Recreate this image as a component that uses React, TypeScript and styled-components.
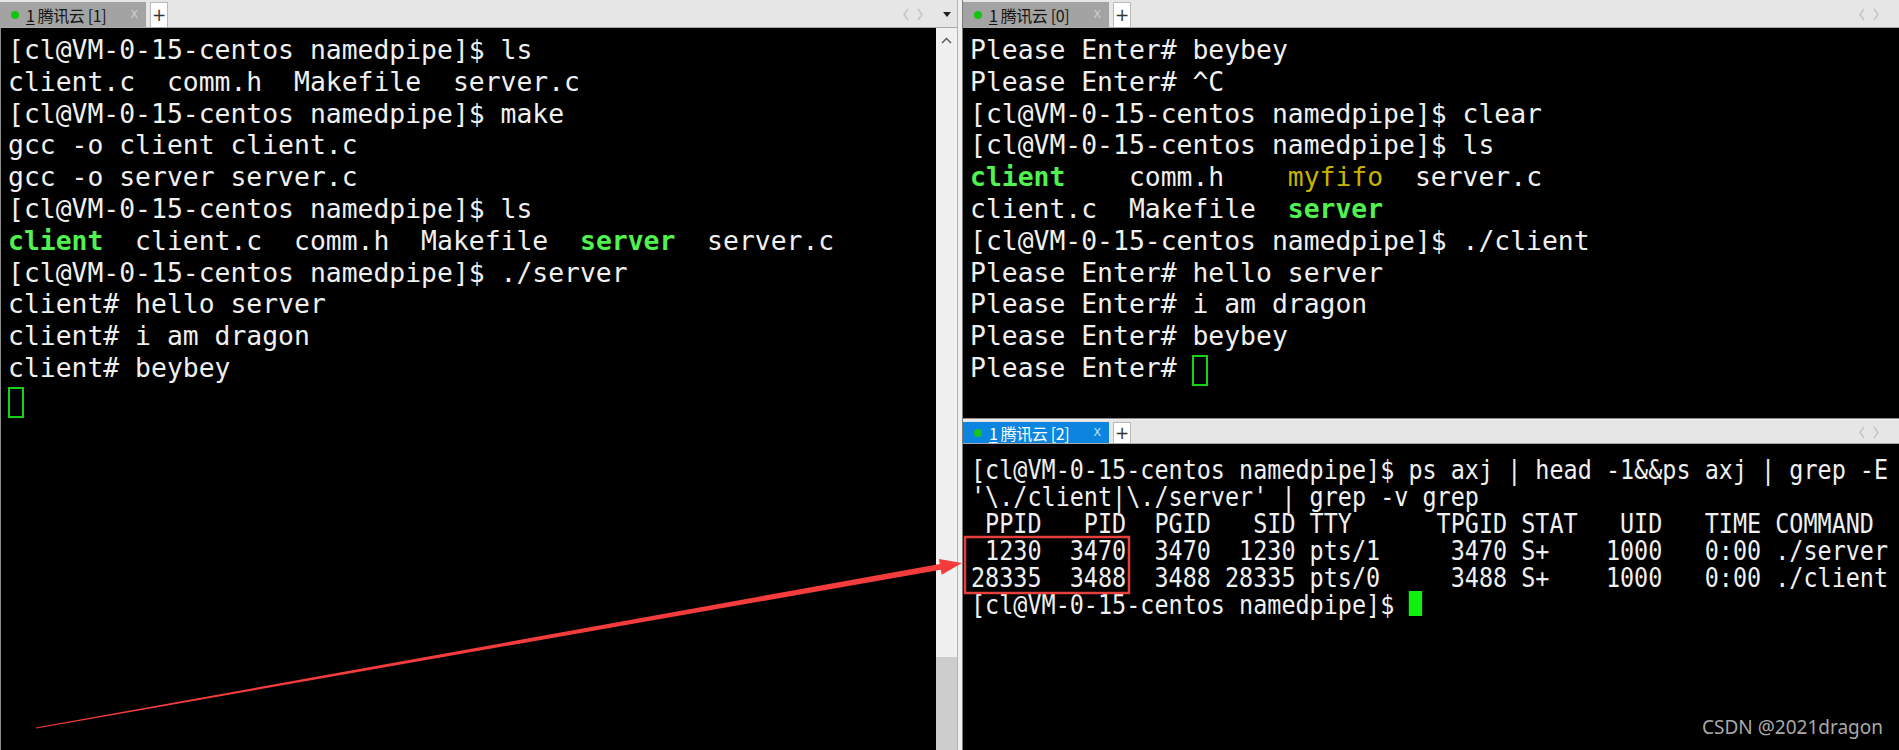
import styled, { createGlobalStyle } from "styled-components";

const PROMPT = "[cl@VM-0-15-centos namedpipe]$ ";

const GlobalStyle = createGlobalStyle`
  html, body {
    margin: 0;
    padding: 0;
  }
  body {
    background: #000;
    overflow: hidden;
  }
`;

const Screen = styled.div`
  position: relative;
  display: flex;
  width: 1899px;
  height: 750px;
  overflow: hidden;
  background: #e6e6e6;
`;

const LeftPane = styled.div`
  width: 957px;
  flex-shrink: 0;
  display: flex;
  flex-direction: column;
`;

const Splitter = styled.div`
  width: 4px;
  flex-shrink: 0;
  background: #efefef;
  border-left: 1px solid #b3b3b3;
  border-right: 1px solid #7c7c7c;
`;

const RightColumn = styled.div`
  flex: 1;
  min-width: 0;
  display: flex;
  flex-direction: column;
`;

const HSplit = styled.div`
  height: 1px;
  flex-shrink: 0;
  border-top: 1px solid #8a8a8a;
  background: #efefef;
`;

const TabBar = styled.div<{ $h: number; $padRight: number }>`
  height: ${(p) => p.$h}px;
  flex-shrink: 0;
  box-sizing: border-box;
  display: flex;
  align-items: stretch;
  padding: 2px ${(p) => p.$padRight}px 0 0;
  background: #e6e6e6;
  border-bottom: 1px solid #a9a9a9;
`;

const Tab = styled.div<{ $active?: boolean }>`
  width: 146px;
  box-sizing: border-box;
  display: flex;
  align-items: center;
  padding: 0 8px 0 11px;
  background: ${(p) => (p.$active ? "#0b85e0" : "#a3a3a3")};
  color: ${(p) => (p.$active ? "#ffffff" : "#141414")};
  font-family: "Noto Sans CJK SC", "Noto Sans", sans-serif;
  font-size: 16px;
`;

const Dot = styled.span<{ $active?: boolean }>`
  width: 8px;
  height: 8px;
  border-radius: 50%;
  background: ${(p) => (p.$active ? "#19c21e" : "#10c410")};
  margin-right: 7px;
`;

const TabLabel = styled.span`
  white-space: pre;
  letter-spacing: -0.4px;
  & u {
    text-underline-offset: 2px;
  }
`;

const TabClose = styled.span<{ $active?: boolean }>`
  margin-left: auto;
  font-family: "DejaVu Sans", sans-serif;
  font-size: 11px;
  color: ${(p) => (p.$active ? "#cfe6fa" : "#d2d2d2")};
`;

const PlusButton = styled.div`
  width: 18px;
  margin-left: 4px;
  box-sizing: border-box;
  display: flex;
  align-items: center;
  justify-content: center;
  background: #ffffff;
  border: 1px solid #b9b9b9;
  border-bottom: none;
  color: #333;
  font-family: "DejaVu Sans", sans-serif;
  font-size: 17px;
`;

const BarTools = styled.div`
  margin-left: auto;
  display: flex;
  align-items: center;
  gap: 20px;
`;

const Chevrons = styled.div`
  display: flex;
  align-items: center;
  gap: 8px;
`;

const PaneBody = styled.div<{ $basis?: number }>`
  flex: ${(p) => (p.$basis ? `0 0 ${p.$basis}px` : "1")};
  min-height: 0;
  display: flex;
`;

const Terminal = styled.div<{ $condensed?: boolean; $bordered?: boolean }>`
  flex: 1;
  min-width: 0;
  overflow: hidden;
  box-sizing: border-box;
  background: #000;
  border-left: ${(p) => (p.$bordered ? "1px solid #8c8c8c" : "none")};
  padding: ${(p) => (p.$condensed ? "13px 0 0 8px" : "6px 0 0 7px")};
  font-family: "DejaVu Sans Mono", monospace;
  font-size: 26.4px;
  color: #f0f0f0;
  white-space: pre;
`;

const TextBlock = styled.div<{ $condensed?: boolean }>`
  transform-origin: left top;
  transform: ${(p) => (p.$condensed ? "scaleX(0.888)" : "none")};
`;

const Line = styled.div<{ $h: number }>`
  height: ${(p) => p.$h}px;
  line-height: ${(p) => p.$h}px;
`;

const Hl = styled.span<{ $color: string; $bold?: boolean }>`
  color: ${(p) => p.$color};
  font-weight: ${(p) => (p.$bold ? 700 : 400)};
`;

const OutlineCursor = styled.span`
  display: inline-block;
  width: 16px;
  height: 31px;
  box-sizing: border-box;
  border: 2px solid #14d214;
  vertical-align: -9px;
`;

const BlockCursor = styled.span`
  display: inline-block;
  width: 15px;
  height: 25px;
  background: #10f010;
  vertical-align: -2px;
`;

const ScrollTrack = styled.div`
  width: 21px;
  flex-shrink: 0;
  display: flex;
  flex-direction: column;
  align-items: center;
  background: #f0f0f0;
`;

const ScrollUp = styled.svg`
  margin-top: 9px;
`;

const ScrollThumb = styled.div`
  margin-top: auto;
  width: 100%;
  height: 93px;
  background: #cdcdcd;
`;

const Overlay = styled.svg`
  position: absolute;
  left: 0;
  top: 0;
  pointer-events: none;
`;

const Watermark = styled.div`
  position: absolute;
  right: 16px;
  top: 714px;
  font-family: "Noto Sans", "Open Sans", sans-serif;
  font-size: 19px;
  color: #a9a9a9;
`;

const G = ({ children }: { children: string }) => (
  <Hl $color="#4ff24f" $bold>
    {children}
  </Hl>
);

const ChevronPair = () => (
  <Chevrons>
    <svg width="6" height="13" viewBox="0 0 6 13">
      <path d="M5 1 L1 6.5 L5 12" fill="none" stroke="#c4c4c4" strokeWidth="1.5" />
    </svg>
    <svg width="6" height="13" viewBox="0 0 6 13">
      <path d="M1 1 L5 6.5 L1 12" fill="none" stroke="#c4c4c4" strokeWidth="1.5" />
    </svg>
  </Chevrons>
);

interface TabsProps {
  index: number;
  active?: boolean;
  height: number;
  padRight: number;
  menu?: boolean;
}

const Tabs = ({ index, active, height, padRight, menu }: TabsProps) => (
  <TabBar $h={height} $padRight={padRight}>
    <Tab $active={active}>
      <Dot $active={active} />
      <TabLabel>
        <u>1</u> 腾讯云 [{index}]
      </TabLabel>
      <TabClose $active={active}>X</TabClose>
    </Tab>
    <PlusButton>+</PlusButton>
    <BarTools>
      <ChevronPair />
      {menu && (
        <svg width="8" height="5" viewBox="0 0 8 5">
          <path d="M0 0 H8 L4 5 Z" fill="#222" />
        </svg>
      )}
    </BarTools>
  </TabBar>
);

const TOP_LH = 31.8;
const BOTTOM_LH = 26.9;

const leftLines = [
  PROMPT + "ls",
  "client.c  comm.h  Makefile  server.c",
  PROMPT + "make",
  "gcc -o client client.c",
  "gcc -o server server.c",
  PROMPT + "ls",
  <>
    <G>client</G>
    {"  client.c  comm.h  Makefile  "}
    <G>server</G>
    {"  server.c"}
  </>,
  PROMPT + "./server",
  "client# hello server",
  "client# i am dragon",
  "client# beybey",
  <OutlineCursor />,
];

const rightTopLines = [
  "Please Enter# beybey",
  "Please Enter# ^C",
  PROMPT + "clear",
  PROMPT + "ls",
  <>
    <G>client</G>
    {"    comm.h    "}
    <Hl $color="#c8b400">myfifo</Hl>
    {"  server.c"}
  </>,
  <>
    {"client.c  Makefile  "}
    <G>server</G>
  </>,
  PROMPT + "./client",
  "Please Enter# hello server",
  "Please Enter# i am dragon",
  "Please Enter# beybey",
  <>
    {"Please Enter# "}
    <OutlineCursor />
  </>,
];

const bottomLines = [
  PROMPT + "ps axj | head -1&&ps axj | grep -E",
  "'\\./client|\\./server' | grep -v grep",
  " PPID   PID  PGID   SID TTY      TPGID STAT   UID   TIME COMMAND",
  " 1230  3470  3470  1230 pts/1     3470 S+    1000   0:00 ./server",
  "28335  3488  3488 28335 pts/0     3488 S+    1000   0:00 ./client",
  <>
    {PROMPT}
    <BlockCursor />
  </>,
];

const renderLines = (lines: React.ReactNode[], h: number) =>
  lines.map((l, i) => (
    <Line key={i} $h={h}>
      {l}
    </Line>
  ));

export default function App() {
  return (
    <>
      <GlobalStyle />
      <Screen>
        <LeftPane>
          <Tabs index={1} height={28} padRight={6} menu />
          <PaneBody>
            <Terminal $bordered>
              <TextBlock>{renderLines(leftLines, TOP_LH)}</TextBlock>
            </Terminal>
            <ScrollTrack>
              <ScrollUp width="11" height="7" viewBox="0 0 11 7">
                <path d="M1 6 L5.5 1.5 L10 6" fill="none" stroke="#555" strokeWidth="1.4" />
              </ScrollUp>
              <ScrollThumb />
            </ScrollTrack>
          </PaneBody>
        </LeftPane>
        <Splitter />
        <RightColumn>
          <Tabs index={0} height={28} padRight={20} />
          <PaneBody $basis={390}>
            <Terminal>
              <TextBlock>{renderLines(rightTopLines, TOP_LH)}</TextBlock>
            </Terminal>
          </PaneBody>
          <HSplit />
          <Tabs index={2} active height={24} padRight={20} />
          <PaneBody>
            <Terminal $condensed>
              <TextBlock $condensed>{renderLines(bottomLines, BOTTOM_LH)}</TextBlock>
            </Terminal>
          </PaneBody>
        </RightColumn>
        <Overlay width="1899" height="750" viewBox="0 0 1899 750">
          <rect x="965" y="537" width="164" height="56" fill="none" stroke="#e5403b" strokeWidth="2.5" />
          <polygon
            points="35.9,727.5 939.8,563.9 938.9,558.9 962,563 941.7,574.7 940.8,569.8 36.1,728.5"
            fill="#f53c3c"
          />
        </Overlay>
        <Watermark>CSDN @2021dragon</Watermark>
      </Screen>
    </>
  );
}
